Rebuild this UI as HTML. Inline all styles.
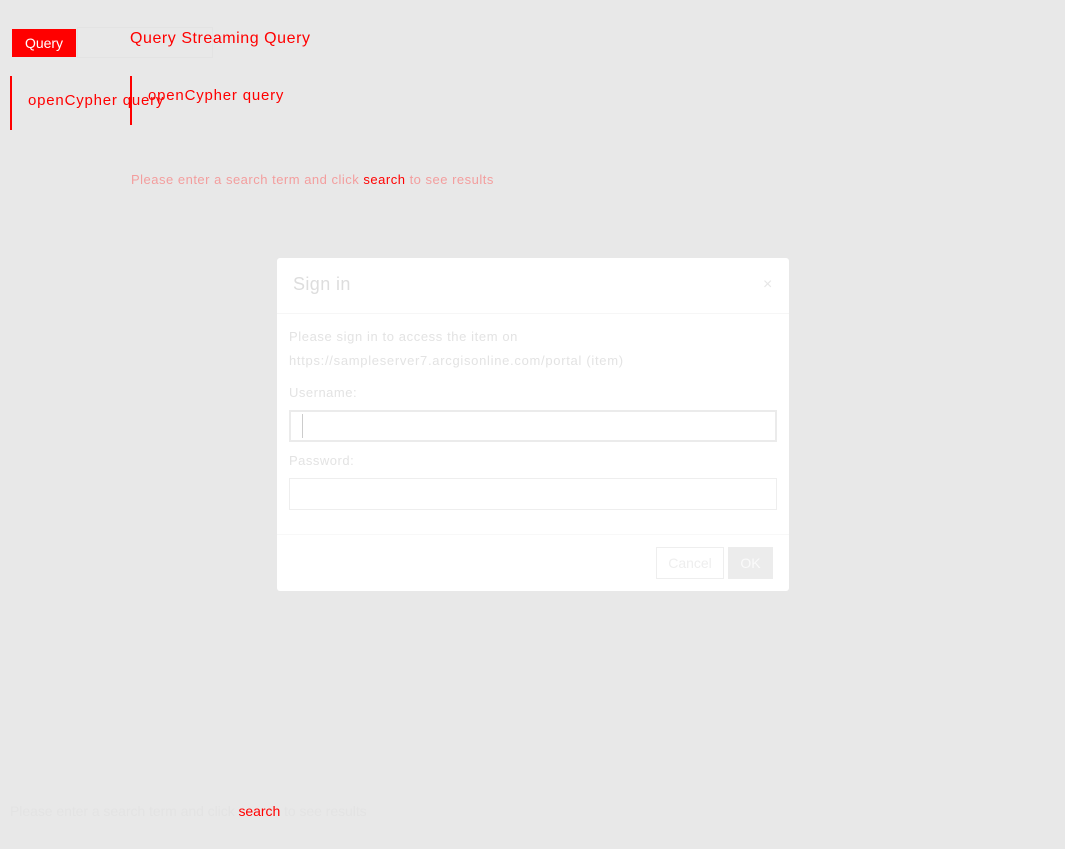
<!DOCTYPE html>
<html><head><meta charset="utf-8"><style>
body{margin:0;width:1065px;height:849px;background:#e8e8e8;font-family:"Liberation Sans",sans-serif;position:relative;overflow:hidden}
.a{position:absolute;white-space:nowrap}
</style></head><body>
<div class="a" style="left:12px;top:29px;width:64px;height:28px;background:#f00;color:#fff;font-size:14px;line-height:28px;text-align:center">Query</div>
<div class="a" style="left:77px;top:27px;width:136px;height:31px;border:1px solid #e3e3e3;box-sizing:border-box"></div>
<div class="a" style="left:130px;top:30px;color:#f00;font-size:16px;letter-spacing:0.55px">Query Streaming Query</div>
<div class="a" style="left:10px;top:76px;width:2px;height:54px;background:#f00"></div>
<div class="a" style="left:28px;top:92px;color:#f00;font-size:15px;letter-spacing:0.8px">openCypher query</div>
<div class="a" style="left:130px;top:76px;width:2px;height:49px;background:#f00"></div>
<div class="a" style="left:148px;top:87px;color:#f00;font-size:15px;letter-spacing:0.8px">openCypher query</div>
<div class="a" style="left:131px;top:172px;color:#f55;font-size:13px;letter-spacing:0.5px"><span style="opacity:.5">Please enter a search term and click</span> <span style="color:#f00">search</span> <span style="opacity:.5">to see results</span></div>
<div class="a" style="left:10px;top:803px;color:#e3e3e3;font-size:14px;letter-spacing:-0.05px">Please enter a search term and click <span style="color:#f00">search</span> to see results</div>
<div class="a" style="left:277px;top:258px;width:512px;height:333px;background:#fff;border-radius:3px">
<div class="a" style="left:16px;top:16px;color:#ddd;font-size:18px;letter-spacing:0.4px">Sign in</div>
<div class="a" style="left:486px;top:18px;color:#e6e6e6;font-size:16px">×</div>
<div class="a" style="left:0;top:55px;width:512px;height:1px;background:#f6f6f6"></div>
<div class="a" style="left:12px;top:71px;color:#e3e3e3;font-size:13px;letter-spacing:0.6px">Please sign in to access the item on</div>
<div class="a" style="left:12px;top:95px;color:#e3e3e3;font-size:13px;letter-spacing:0.7px">https://sampleserver7.arcgisonline.com/portal (item)</div>
<div class="a" style="left:12px;top:127px;color:#e3e3e3;font-size:13px;letter-spacing:0.5px">Username:</div>
<div class="a" style="left:12px;top:152px;width:488px;height:32px;border:2px solid #ebebeb;box-sizing:border-box"></div>
<div class="a" style="left:25px;top:156px;width:1px;height:24px;background:#ccc"></div>
<div class="a" style="left:12px;top:195px;color:#e3e3e3;font-size:13px;letter-spacing:0.5px">Password:</div>
<div class="a" style="left:12px;top:220px;width:488px;height:32px;border:1px solid #eee;box-sizing:border-box"></div>
<div class="a" style="left:0;top:276px;width:512px;height:1px;background:#f8f8f8"></div>
<div class="a" style="left:379px;top:289px;width:68px;height:32px;border:1px solid #eee;box-sizing:border-box;color:#eee;font-size:14px;line-height:30px;text-align:center">Cancel</div>
<div class="a" style="left:451px;top:289px;width:45px;height:32px;background:#ececec;color:#fafafa;font-size:14px;line-height:32px;text-align:center">OK</div>
</div>
</body></html>
